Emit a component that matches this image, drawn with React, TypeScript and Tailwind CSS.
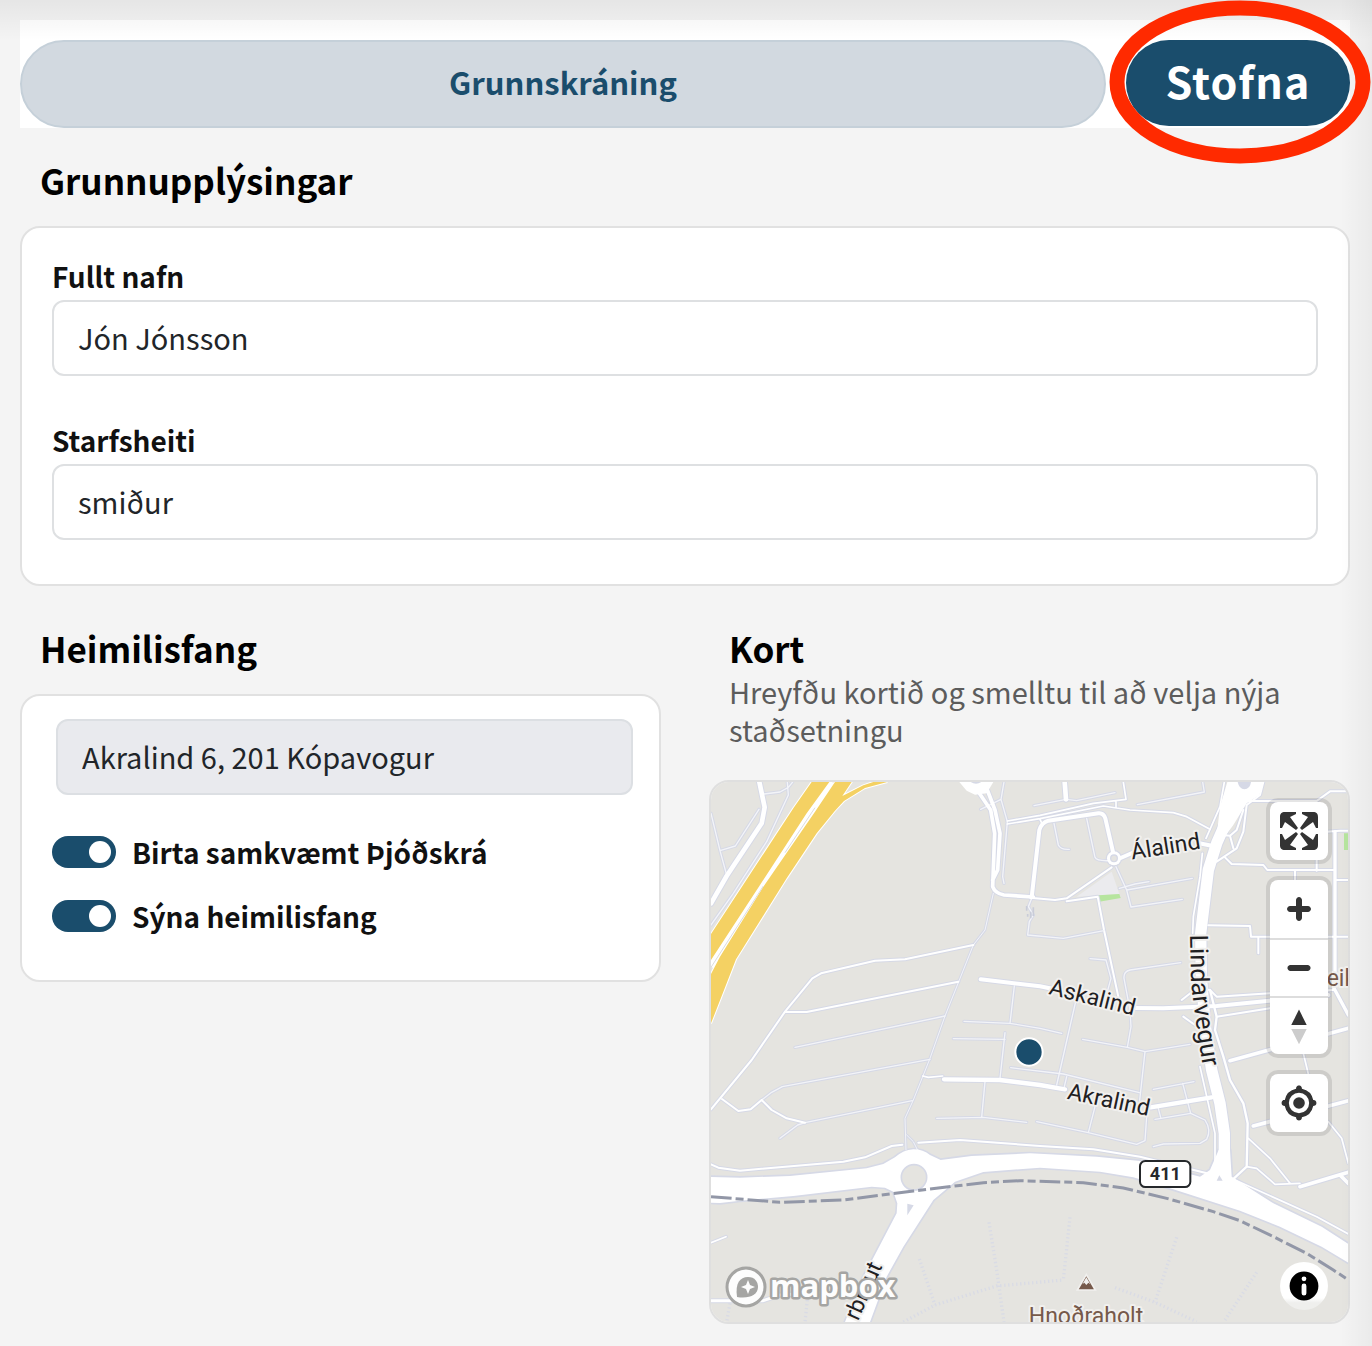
import { useState } from 'react'

interface Road {
  d: string
  w: number
}

interface MapLabel {
  text: string
  x: number
  y: number
  rotate: number
}

// Map geometry, drawn at three units per pixel
const roads: Road[] = [
  { w: 4, d: 'M33 130L60 242L80 315M60 242L106 228L177 118M192 72L240 66L265 52L278 36M262 36L265 75L200 215L100 370L33 465' },
  { w: 4, d: 'M912 36L903 88L922 155L908 320L912 340M842 118L903 88' },
  { w: 5, d: 'M922 162L1020 146L1210 108L1290 120L1420 128L1460 140L1530 178M922 153L1020 136L1180 100L1278 88L1270 36M1248 95V112M1020 148L1028 165' },
  { w: 4, d: 'M1002 107L1098 88L1130 92L1245 68M1312 104L1513 66L1508 36' },
  { w: 4, d: 'M1062 160L1075 225Q1082 240 1108 238M1160 145L1185 262Q1190 274 1230 272' },
  { w: 6, d: 'M990 383L1065 390L1100 385L1235 292M1100 394L1193 380L1212 480L1255 680' },
  { w: 4, d: 'M1248 290L1280 360L1293 411L1447 388M1280 360L1477 325M1258 355L1305 342L1347 335' },
  { w: 4, d: 'M995 385L985 410L1000 435L988 455L983 495L1090 505L1212 482M1170 566L1218 570L1233 625L1215 690' },
  { w: 4, d: 'M1442 578L1290 600Q1270 605 1272 625L1290 720L1293 770L1282 832M1148 808L1282 832L1335 845L1470 823' },
  { w: 4, d: 'M943 648L930 760M792 754L930 760L1020 775L1085 790M760 806L915 808M915 788L900 925M1128 690L1070 945M1335 845L1318 1000' },
  { w: 4, d: 'M710 1045L850 1042L980 1057M855 935L845 1042M932 893L1090 912L1318 968M1100 920L1093 950' },
  { w: 4, d: 'M1010 1055L1165 1088L1310 1123L1335 1112L1340 1040M1185 1010L1165 1088M1360 958L1482 935M1448 940L1472 1030' },
  { w: 4, d: 'M1365 1048L1472 1030L1515 1050Q1535 1080 1520 1108L1500 1120L1390 1122L1360 1130M1375 1015L1382 1042' },
  { w: 3, d: 'M880 370L855 480L820 525L735 738L690 865L640 990L615 1045L618 1140M620 1095L640 1115L655 1145' },
  { w: 6, d: 'M820 525L615 568L525 572L363 610L337 625L255 725L155 870L33 1018M255 725L320 726L775 635' },
  { w: 4, d: 'M285 832L735 738M690 868L247 950L215 967L185 990M315 1058L637 992M315 1058L293 1065L240 1105' },
  { w: 6, d: 'M185 990L152 1018L115 1023L66 987M185 990L215 1020L260 1045L315 1058' },
  { w: 6, d: 'M33 1183L55 1193L120 1202L430 1175L495 1162L575 1128L607 1124M655 1118L780 1110L1020 1128L1180 1138L1320 1160L1530 1212' },
  { w: 5, d: 'M1573 36L1560 110L1518 205M1507 250L1500 320L1480 440L1478 490M1500 890L1545 1090L1545 1180L1530 1210' },
  { w: 6, d: 'M1690 36L1680 75L1640 105L1630 185L1610 235L1550 275M1630 120L1610 180L1590 197L1565 195M1590 197L1600 235M1640 93H1850L1890 64H1945' },
  { w: 6, d: 'M1575 262L1595 282L1690 285L1702 300H1900M1785 302V330M1850 302V260M1525 466L1650 468L1653 500H1945M1675 502V550M1880 185L1920 182H1945M1905 330H1945' },
  { w: 6, d: 'M1445 690L1490 655L1530 660L1550 680L1710 670L1900 660M1550 740L1710 715M1450 740L1485 765' },
  { w: 7, d: 'M1530 660L1540 700L1550 740L1545 780L1570 860L1590 930L1630 1000L1643 1060L1640 1190L1602 1225' },
  { w: 5, d: 'M1810 850L1825 912M1645 1105L1710 1165L1770 1240M1640 1190L1670 1195L1725 1243L1800 1240M1885 1055L1925 1105L1945 1180M1605 1230L1850 1340L1945 1392' },
  { w: 5, d: 'M33 1418L78 1400M668 918L685 922L728 918' },
  { w: 9, d: 'M33 1592L190 1592L240 1575L430 1562' },
  { w: 10, d: 'M1902 655L1945 735M1905 185V640' },
  { w: 11, d: 'M1590 872L1945 775M1660 1068L1945 992M1800 1250L1945 1207M1920 1215L1945 1240' },
  { w: 14, d: 'M178 36L194 112L185 160L80 318L33 400M1094 36L1098 88' },
  { w: 11, d: 'M862 60L885 120L900 190L893 300L878 330M835 65L872 120L884 190L878 350Q885 370 912 375L1000 381' },
  { w: 12, d: 'M995 382L1018 180Q1025 158 1045 152L1195 130Q1210 128 1216 145L1240 250M1262 264L1310 243M1490 218L1535 227' },
  { w: 12, d: 'M842 628L1020 649L1060 657M1300 714L1390 715L1550 708L1885 675' },
  { w: 13, d: 'M732 928L900 930L1020 945L1095 958M1352 1012L1535 982' },
  { w: 34, d: 'M1620 60L1550 220L1525 300L1502 490L1504 620L1515 760L1535 900L1560 1000L1573 1090L1573 1210' },
]

const mainRoad =
  'M33 1221L120 1223L270 1218L500 1195L550 1182L585 1162Q610 1140 640 1138Q670 1138 690 1155L722 1170L815 1158L990 1150L1190 1160L1320 1173L1500 1220L1530 1200L1556 1140H1590L1595 1220L1720 1300L1865 1370L1945 1422V1478L1865 1430L1740 1370L1620 1322L1420 1258L1300 1222L1200 1205L1020 1193L850 1206L765 1235L700 1290L610 1430L560 1520L510 1656H435L480 1540L590 1330L592 1300L580 1265L555 1253L515 1250L280 1278L120 1292L60 1299L33 1298Z'

const highway = [
  'M335 36H388L320 130L180 345L33 570V492L280 115Z',
  'M405 36H455L427 78L490 46L520 36H562L495 54L432 93L405 122L350 190L260 325L108 568L80 640L33 760V705L55 655L33 705V612L60 560L190 350L345 125Z',
]

const footpaths =
  'M867 1357L890 1500L912 1656M658 1467L705 1605M610 1656L705 1605L890 1548L1090 1530M1110 1342L1090 1530M1430 1402L1365 1597M1245 1553L1365 1597L1490 1655M1670 1507L1575 1650M90 1600L80 1656M322 1590L315 1656'

const labels: MapLabel[] = [
  { text: 'Álalind', x: 1400, y: 252, rotate: -9 },
  { text: 'Askalind', x: 1172, y: 704, rotate: 14 },
  { text: 'Akralind', x: 1222, y: 1012, rotate: 12 },
]

function MapCanvas() {
  return (
    <svg
      viewBox="33 36 1911 1620"
      preserveAspectRatio="xMidYMid slice"
      className="block h-full w-full font-['Roboto',sans-serif]"
      role="img"
      aria-label="Kort"
    >
      <rect x="-1000" width="4000" height="1700" fill="#e5e4e0" />
      <path d="M1130 380L1235 305L1258 372Z" fill="#ebebee" />
      <path d="M1196 376L1258 372L1262 384L1198 395Z" fill="#b6e59e" />
      <path d="M1932 190H1950V240H1932Z" fill="#b6e59e" />
      <path d={footpaths} fill="none" stroke="#d9dbe5" strokeWidth="10" strokeDasharray="4 8" />

      {/* Casings first so that junctions stay open */}
      <g fill="none" stroke="#d6d9e6" strokeLinejoin="round" strokeLinecap="round">
        {roads.map((road) => (
          <path key={road.d} d={road.d} strokeWidth={road.w + 6} />
        ))}
        <path d={mainRoad} strokeWidth="10" />
        <circle cx="1242" cy="265" r="23" strokeWidth="4" />
      </g>
      <g fill="none" stroke="#ffffff" strokeLinejoin="round" strokeLinecap="round">
        {roads.map((road) => (
          <path key={road.d} d={road.d} strokeWidth={road.w} stroke={road.w < 5 ? '#f3f4f8' : '#ffffff'} />
        ))}
      </g>
      <path d={mainRoad} fill="#ffffff" />
      <path d="M778 36L800 62L825 74L860 70L880 36Z" fill="#ffffff" />
      <path d="M812 36Q828 46 844 36Z" fill="#d6d9e6" />
      <path d="M1582 36H1690L1678 75L1640 100L1600 165L1545 240L1560 110Z" fill="#ffffff" />
      <path d="M1613 36Q1618 58 1633 58Q1650 58 1653 36Z" fill="#d6d9e6" />
      <circle cx="1242" cy="265" r="21" fill="#ffffff" />
      <circle cx="1242" cy="265" r="10" fill="#e5e4e0" stroke="#d6d9e6" strokeWidth="4" />
      <circle cx="642" cy="1222" r="38" fill="#e5e4e0" stroke="#d6d9e6" strokeWidth="5" />
      <path d="M622 1301L641 1306L622 1336Z" fill="#d6d9e6" />
      <path d="M1558 1216L1568 1232H1550Z" fill="#d6d9e6" />
      <path d="M980 408V422M1000 412V438M983 432V440M992 425V445" stroke="#c9ccd8" strokeWidth="5" />

      <path d="M396 36L333 128L185 348L33 590" fill="none" stroke="#ffffff" strokeWidth="18" />
      <g fill="#f4d163" stroke="#ffffff" strokeWidth="6" style={{ paintOrder: 'stroke' }}>
        {highway.map((d) => (
          <path key={d} d={d} />
        ))}
      </g>
      <path d="M345 113L255 248M190 348L33 592" fill="none" stroke="#dcdcdc" strokeWidth="3" />

      <path
        d="M33 1280L240 1297L430 1290L640 1263L850 1238L960 1232L1150 1238L1270 1254L1400 1285L1540 1325L1620 1352L1720 1400L1820 1450L1900 1500L1945 1530"
        fill="none"
        stroke="#9297a7"
        strokeWidth="9"
        strokeDasharray="62 12 24 12"
      />

      {/* Street names */}
      <g
        fill="#1f2022"
        stroke="#f1f0ee"
        strokeWidth="12"
        strokeLinejoin="round"
        fontSize="69"
        textAnchor="middle"
        style={{ paintOrder: 'stroke' }}
      >
        {labels.map((label) => (
          <text key={label.text} x={label.x} y={label.y} transform={`rotate(${label.rotate} ${label.x} ${label.y})`}>
            {label.text}
          </text>
        ))}
        <path id="lindarvegur" d="M1470 494L1473 620Q1480 740 1528 1000" fill="none" stroke="none" />
        <text textAnchor="start" fontSize="76">
          <textPath href="#lindarvegur">Lindarvegur</textPath>
        </text>
        <text x="548" y="1488" textAnchor="end" transform="rotate(-66 548 1488)">
          rbraut
        </text>
        <g fill="#76594a">
          <text x="1158" y="1662">Hnoðraholt</text>
          <text x="1880" y="648" textAnchor="start">eik</text>
        </g>
      </g>

      <path d="M1159 1514L1186 1560H1132Z" fill="#76594a" stroke="#f1f0ee" strokeWidth="5" />
      <path d="M1159 1522L1171 1543L1165 1538L1159 1545L1153 1538L1147 1543Z" fill="#f1f0ee" />

      <rect x="1320" y="1173" width="151" height="78" rx="16" fill="#ffffff" stroke="#25282b" strokeWidth="6" />
      <text x="1396" y="1230" fontSize="54" fontWeight="700" textAnchor="middle" fill="#25282b">
        411
      </text>

      <circle cx="987" cy="846" r="41" fill="#1a4d6c" stroke="#ffffff" strokeWidth="6" />
    </svg>
  )
}

function MapboxLogo() {
  return (
    <svg viewBox="0 0 176 46" className="h-[46px] w-[176px]">
      <circle cx="23" cy="23" r="19" fill="#fdfdfd" stroke="#a5a5a3" strokeWidth="3" />
      <path d="M14 33C12 19 17 13 25 13C32 13 35 18 35 23C35 31 26 35 14 33Z" fill="#a5a5a3" />
      <path d="M25 16L27 21L32 23L27 25L25 30L23 25L18 23L23 21Z" fill="#fdfdfd" />
      <text
        x="47"
        y="33"
        fontSize="31"
        fontWeight="700"
        fill="#fdfdfd"
        stroke="#a5a5a3"
        strokeWidth="5"
        strokeLinejoin="round"
        className="font-['Open_Sans',sans-serif]"
        style={{ paintOrder: 'stroke' }}
      >
        mapbox
      </text>
    </svg>
  )
}

function TextField({ id, label, value }: { id: string; label: string; value: string }) {
  return (
    <div>
      <label htmlFor={id} className="block pb-0.5 text-[28px] leading-[44px] font-bold text-[#111111]">
        {label}
      </label>
      <input
        id={id}
        type="text"
        defaultValue={value}
        className="block h-[76px] w-full rounded-xl border-2 border-[#dee0e2] bg-white px-6 pb-0.5 text-[29px] text-[#212529]"
      />
    </div>
  )
}

function Toggle({ label }: { label: string }) {
  const [checked, setChecked] = useState(true)

  return (
    <label className="flex h-8 cursor-pointer items-center gap-4 text-[28px] font-bold text-[#111111]">
      <input
        type="checkbox"
        role="switch"
        checked={checked}
        onChange={(e) => setChecked(e.target.checked)}
        className="h-8 w-16 shrink-0 appearance-none rounded-full bg-gray-400 p-[5px] before:block before:size-[22px] before:rounded-full before:bg-white checked:bg-[#1a4d6c] checked:before:ml-8"
      />
      {label}
    </label>
  )
}

const headingClass = 'text-[35px] leading-[48px] font-bold'
const controlClass = 'block h-[58px] w-[58px] cursor-pointer'
const groupClass = 'overflow-hidden rounded-lg bg-white ring-4 ring-black/10'

export default function App() {
  return (
    <div className="relative min-h-screen overflow-hidden bg-[#f4f4f4] pt-5 pr-[22px] pb-[22px] pl-5 font-['Noto_Sans_CJK_SC',sans-serif] text-black">
      <header className="flex items-start gap-5 bg-white pt-5">
        <button
          type="button"
          className="h-[88px] flex-1 rounded-full border-2 border-[#c5d0d9] bg-[#d2d9e0] pb-1 text-[31px] font-bold text-[#1a4d6c]"
        >
          Grunnskráning
        </button>
        <div className="relative">
          <button
            type="button"
            className="block h-[86px] w-[224px] rounded-full bg-[#1a4d6c] pb-1.5 text-[43px] font-bold tracking-wide text-white"
          >
            Stofna
          </button>
          <svg viewBox="0 0 262 164" className="pointer-events-none absolute -top-10 -left-[17px] z-20 h-[164px] w-[262px] max-w-none">
            <ellipse cx="131" cy="82" rx="123" ry="74" fill="none" stroke="#ff2a00" strokeWidth="15" />
          </svg>
        </div>
      </header>

      <section className="mt-7">
        <h2 className={`${headingClass} pl-5`}>Grunnupplýsingar</h2>
        <div className="mt-[22px] flex flex-col gap-[42px] rounded-[20px] border-2 border-[#e1e1e1] bg-white px-[30px] pt-[26px] pb-11">
          <TextField id="name" label="Fullt nafn" value="Jón Jónsson" />
          <TextField id="job" label="Starfsheiti" value="smiður" />
        </div>
      </section>

      <div className="mt-[38px] grid grid-cols-2 items-start gap-12">
        <section>
          <h2 className={`${headingClass} pl-5`}>Heimilisfang</h2>
          <div className="mt-[22px] rounded-[20px] border-2 border-[#e1e1e1] bg-white px-[30px] pt-[23px] pb-12">
            <div className="-mr-1 pl-1">
              <input
                type="text"
                aria-label="Heimilisfang"
                defaultValue="Akralind 6, 201 Kópavogur"
                readOnly
                className="block h-[76px] w-full rounded-xl border-2 border-[#dcdfe3] bg-[#e9eaee] px-6 pb-0.5 text-[29px] text-[#212529]"
              />
            </div>
            <div className="mt-[41px] flex flex-col gap-8">
              <Toggle label="Birta samkvæmt Þjóðskrá" />
              <Toggle label="Sýna heimilisfang" />
            </div>
          </div>
        </section>

        <section>
          <div className="pl-5">
            <h2 className={headingClass}>Kort</h2>
            <p className="text-[29px] leading-[38px] text-[#5c5c5c]">
              Hreyfðu kortið og smelltu til að velja nýja staðsetningu
            </p>
          </div>
          <div className="relative mt-8 h-[544px] overflow-hidden rounded-[20px] border-2 border-[#dfdfdf]">
            <MapCanvas />

            <div className="absolute top-5 right-5 flex flex-col gap-5 text-[#333333]">
              <div className={groupClass}>
                <button type="button" aria-label="Allur skjárinn" className={controlClass}>
                  <svg viewBox="0 0 29 29" fill="currentColor">
                    <path d="M24 16v5.5c0 1.75-.75 2.5-2.5 2.5H16v-1l3-1.5-4-5.5 1-1 5.5 4 1.5-3h1zM6 16l1.5 3 5.5-4 1 1-4 5.5 3 1.5v1H7.5C5.75 24 5 23.25 5 21.5V16h1zm7-11v1l-3 1.5 4 5.5-1 1-5.5-4L6 13H5V7.5C5 5.75 5.75 5 7.5 5H13zm11 2.5c0-1.75-.75-2.5-2.5-2.5H16v1l3 1.5-4 5.5 1 1 5.5-4 1.5 3h1V7.5z" />
                  </svg>
                </button>
              </div>

              <div className={groupClass}>
                <button type="button" aria-label="Stækka" className={controlClass}>
                  <svg viewBox="0 0 29 29" fill="currentColor">
                    <path d="M14.5 8.5c-.75 0-1.5.75-1.5 1.5v3h-3c-.75 0-1.5.75-1.5 1.5S9.25 16 10 16h3v3c0 .75.75 1.5 1.5 1.5S16 19.75 16 19v-3h3c.75 0 1.5-.75 1.5-1.5S19.75 13 19 13h-3v-3c0-.75-.75-1.5-1.5-1.5z" />
                  </svg>
                </button>
                <button type="button" aria-label="Minnka" className={`${controlClass} border-t-2 border-[#dddddd]`}>
                  <svg viewBox="0 0 29 29" fill="currentColor" className="h-full w-full">
                    <path d="M10 13c-.75 0-1.5.75-1.5 1.5S9.25 16 10 16h9c.75 0 1.5-.75 1.5-1.5S19.75 13 19 13h-9z" />
                  </svg>
                </button>
                <button type="button" aria-label="Snúa í norður" className={`${controlClass} border-t-2 border-[#dddddd]`}>
                  <svg viewBox="0 0 29 29" fill="currentColor" className="h-full w-full">
                    <path d="M10.5 14l4-8 4 8h-8z" />
                    <path d="M10.5 16l4 8 4-8h-8z" fill="#cccccc" />
                  </svg>
                </button>
              </div>

              <div className={groupClass}>
                <button type="button" aria-label="Mín staðsetning" className={controlClass}>
                  <svg viewBox="0 0 20 20" fill="currentColor">
                    <path d="M10 4C9 4 9 5 9 5v.1A5 5 0 0 0 5.1 9H5s-1 0-1 1 1 1 1 1h.1A5 5 0 0 0 9 14.9v.1s0 1 1 1 1-1 1-1v-.1a5 5 0 0 0 3.9-3.9h.1s1 0 1-1-1-1-1-1h-.1A5 5 0 0 0 11 5.1V5s0-1-1-1zm0 2.5a3.5 3.5 0 1 1 0 7 3.5 3.5 0 1 1 0-7z" />
                    <circle cx="10" cy="10" r="2" />
                  </svg>
                </button>
              </div>
            </div>

            <a href="#mapbox" aria-label="Mapbox" className="absolute bottom-3 left-3">
              <MapboxLogo />
            </a>
            <button
              type="button"
              aria-label="Um kortið"
              className="absolute right-5 bottom-3 size-12 rounded-full bg-linear-to-b from-white from-75% to-[#efefed] to-85% text-black"
            >
              <svg viewBox="0 0 20 20" fill="currentColor" fillRule="evenodd">
                <path d="M4 10a6 6 0 1 0 12 0 6 6 0 1 0-12 0m5-3a1 1 0 1 0 2 0 1 1 0 1 0-2 0m0 3a1 1 0 1 1 2 0v3a1 1 0 1 1-2 0" />
              </svg>
            </button>
          </div>
        </section>
      </div>

      {/* Edge shading */}
      <div className="pointer-events-none absolute inset-x-0 top-0 h-10 bg-linear-to-b from-black/6 to-transparent" />
      <div className="pointer-events-none absolute inset-y-0 right-0 w-8 bg-linear-to-l from-black/4 to-transparent" />
    </div>
  )
}
